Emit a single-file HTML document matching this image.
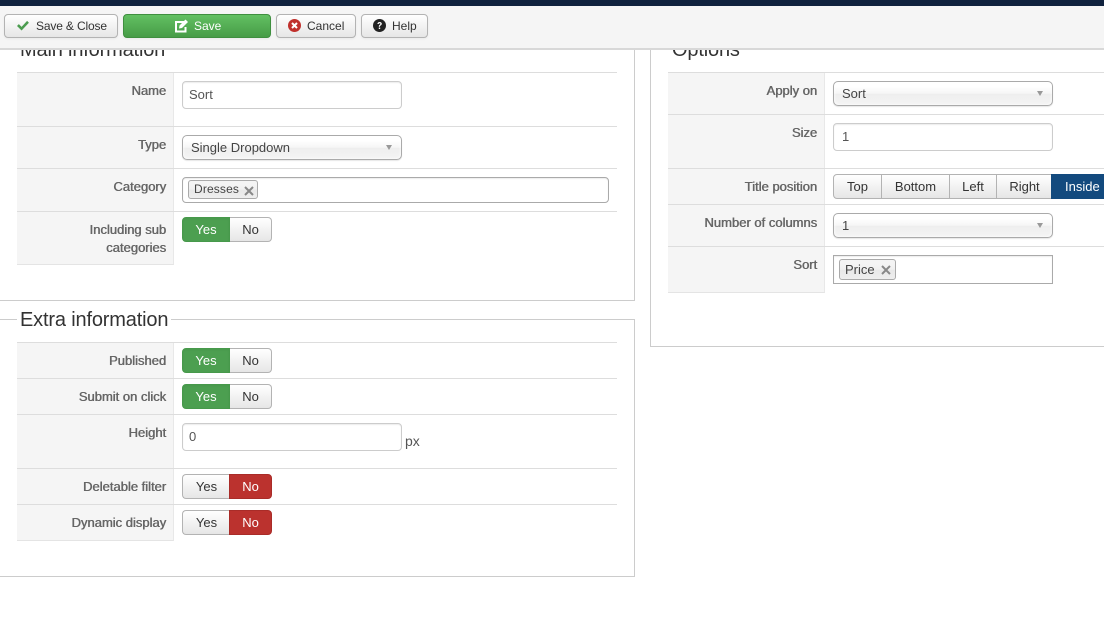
<!DOCTYPE html>
<html><head><meta charset="utf-8"><style>
html,body{margin:0;padding:0;background:#fff;width:1104px;height:619px;overflow:hidden}
body{position:relative;font:13px/18px "Liberation Sans",Arial,sans-serif;color:#333}
div,span,svg{position:absolute;box-sizing:border-box}
.nav{left:0;top:0;width:1104px;height:6px;background:#10223e}
.tb{left:0;top:6px;width:1104px;height:44px;background:#f5f5f5;border-bottom:2px solid #d8d8d8;z-index:5}
.b{top:14px;height:24px;border:1px solid #b3b3b3;border-radius:4px;background:linear-gradient(#fff,#e6e6e6);font-size:12px;line-height:22px;color:#333;z-index:6;box-shadow:0 1px 2px rgba(0,0,0,.05);white-space:nowrap}
.b span{top:0}
.fs{border:1px solid #ccc;background:#fff}
.lg{background:#fff;font-size:20px;line-height:24px;color:#333;padding:0 3px;height:24px;white-space:nowrap;letter-spacing:-.17px}
.th{background:#f5f5f5;border-right:1px solid #e8e8e8;border-bottom:1px solid #e4e4e4}
.ln{height:1px;background:#ddd}
.l{text-align:right;color:#666;text-shadow:.5px 0 0 #666;white-space:nowrap}
.i{border:1px solid #ccc;border-radius:4px;background:#fff;color:#555;padding:4px 6px;line-height:18px;box-shadow:inset 0 1px 1px rgba(0,0,0,.075)}
.s{border:1px solid #aaa;border-radius:5px;height:25px;background:linear-gradient(#fff 20%,#f6f6f6 50%,#eee 52%,#f4f4f4 100%);box-shadow:inset 0 0 3px #fff,0 1px 1px rgba(0,0,0,.1);color:#444;line-height:24px;padding-left:8px}
.s:after{content:"";position:absolute;right:9px;top:9px;border-left:3.500px solid transparent;border-right:3.500px solid transparent;border-top:5px solid #999}
.sw{height:25px;width:90px}
.o{top:0;height:25px;text-align:center;line-height:24px;background:linear-gradient(#fff,#e6e6e6);border:1px solid #b3b3b3;color:#333}
.g{background:#4c9f50;border:1px solid #47994b;color:#fff;box-shadow:inset 0 1px 2px rgba(0,0,0,.05)}
.r{background:#bb322e;border:1px solid #a92c28;color:#fff}
.t{border:1px solid #aaa;border-radius:3px;background:linear-gradient(#f4f4f4 20%,#f0f0f0 50%,#e8e8e8 52%,#eee 100%);color:#444}
</style></head><body>
<div class="nav"></div>
<div class="tb"></div>
<div class="b" style="left:4px;width:114px"><svg style="left:11px;top:5px" width="13" height="11" viewBox="0 0 14 12"><path d="M1 6.500l2-2 3 3 6-6.500 2 2-8 8.500z" fill="#4b9c4f"/></svg><span style="left:31px;letter-spacing:-.15px">Save &amp; Close</span></div>
<div class="b" style="left:123px;width:148px;background:linear-gradient(#62c062,#479c47);border-color:#3f8f3f;color:#fff"><svg style="left:50px;top:4px" width="15" height="14" viewBox="0 0 15 14"><path d="M1 2h9v2H3v7.500h7.500V8h2v5.500H1z" fill="#fff"/><path d="M5.500 6.500l6-6 2.500 2.500-6 6-3 .5z" fill="#fff"/></svg><span style="left:70px">Save</span></div>
<div class="b" style="left:276px;width:80px"><svg style="left:11px;top:4px" width="13" height="13" viewBox="0 0 13 13"><circle cx="6.500" cy="6.500" r="6.500" fill="#c0302c"/><path d="M4 4l5 5M9 4l-5 5" stroke="#fff" stroke-width="2"/></svg><span style="left:30px">Cancel</span></div>
<div class="b" style="left:361px;width:67px"><svg style="left:11px;top:4px" width="13" height="13" viewBox="0 0 13 13"><circle cx="6.500" cy="6.500" r="6.500" fill="#222"/><path d="M4.400 5c.1-1.300 1-2 2.200-2 1.300 0 2.200.8 2.200 1.800 0 1.500-1.800 1.500-1.800 2.900H5.800c0-2 1.600-2 1.600-2.800 0-.4-.3-.7-.8-.7s-.8.300-.9.800z" fill="#fff"/><rect x="5.800" y="8.500" width="1.400" height="1.500" fill="#fff"/></svg><span style="left:30px">Help</span></div>

<!-- Main -->
<div class="fs" style="left:-20px;top:40px;width:655px;height:261px"></div>
<div class="lg" style="left:17px;top:38px">Main information</div>
<div class="th" style="left:17px;top:73px;width:157px;height:192px"></div>
<div class="ln" style="left:17px;top:72px;width:600px"></div>
<div class="ln" style="left:17px;top:126px;width:600px"></div>
<div class="ln" style="left:17px;top:168px;width:600px"></div>
<div class="ln" style="left:17px;top:211px;width:600px"></div>
<div class="l" style="left:17px;width:149px;top:82px">Name</div>
<div class="l" style="left:17px;width:149px;top:136px">Type</div>
<div class="l" style="left:17px;width:149px;top:178px">Category</div>
<div class="l" style="left:17px;width:149px;top:221px">Including sub</div>
<div class="l" style="left:17px;width:149px;top:239px">categories</div>
<div class="i" style="left:182px;top:81px;width:220px;height:28px">Sort</div>
<div class="s" style="left:182px;top:135px;width:220px">Single Dropdown</div>
<div class="i" style="left:182px;top:177px;width:427px;height:26px;border-color:#aaa"></div>
<div class="t" style="left:188px;top:180px;width:70px;height:19px"><span style="left:5px;top:0;font-size:12px;letter-spacing:.15px;line-height:17px">Dresses</span><svg style="left:55px;top:5px" width="10" height="10" viewBox="0 0 10 10"><path d="M1 1l8 8M9 1l-8 8" stroke="#888" stroke-width="2"/></svg></div>
<div class="sw" style="left:182px;top:217px"><div class="o g" style="left:0;width:48px;border-radius:4px 0 0 4px">Yes</div><div class="o" style="left:48px;width:42px;border-left:0;border-radius:0 4px 4px 0">No</div></div>

<!-- Extra -->
<div class="fs" style="left:-20px;top:319px;width:655px;height:258px"></div>
<div class="lg" style="left:17px;top:308px">Extra information</div>
<div class="th" style="left:17px;top:343px;width:157px;height:198px"></div>
<div class="ln" style="left:17px;top:342px;width:600px"></div>
<div class="ln" style="left:17px;top:378px;width:600px"></div>
<div class="ln" style="left:17px;top:414px;width:600px"></div>
<div class="ln" style="left:17px;top:468px;width:600px"></div>
<div class="ln" style="left:17px;top:504px;width:600px"></div>
<div class="l" style="left:17px;width:149px;top:352px">Published</div>
<div class="l" style="left:17px;width:149px;top:388px">Submit on click</div>
<div class="l" style="left:17px;width:149px;top:424px">Height</div>
<div class="l" style="left:17px;width:149px;top:478px">Deletable filter</div>
<div class="l" style="left:17px;width:149px;top:514px">Dynamic display</div>
<div class="sw" style="left:182px;top:348px"><div class="o g" style="left:0;width:48px;border-radius:4px 0 0 4px">Yes</div><div class="o" style="left:48px;width:42px;border-left:0;border-radius:0 4px 4px 0">No</div></div>
<div class="sw" style="left:182px;top:384px"><div class="o g" style="left:0;width:48px;border-radius:4px 0 0 4px">Yes</div><div class="o" style="left:48px;width:42px;border-left:0;border-radius:0 4px 4px 0">No</div></div>
<div class="i" style="left:182px;top:423px;width:220px;height:28px">0</div>
<div style="left:405px;top:432px;color:#555;font-size:14px">px</div>
<div class="sw" style="left:182px;top:474px"><div class="o" style="left:0;width:48px;border-right:0;border-radius:4px 0 0 4px">Yes</div><div class="o r" style="left:47px;width:43px;border-radius:0 4px 4px 0">No</div></div>
<div class="sw" style="left:182px;top:510px"><div class="o" style="left:0;width:48px;border-right:0;border-radius:4px 0 0 4px">Yes</div><div class="o r" style="left:47px;width:43px;border-radius:0 4px 4px 0">No</div></div>

<!-- Options -->
<div class="fs" style="left:650px;top:40px;width:480px;height:307px"></div>
<div class="lg" style="left:669px;top:38px">Options</div>
<div class="th" style="left:668px;top:73px;width:157px;height:220px"></div>
<div class="ln" style="left:668px;top:72px;width:436px"></div>
<div class="ln" style="left:668px;top:114px;width:436px"></div>
<div class="ln" style="left:668px;top:168px;width:436px"></div>
<div class="ln" style="left:668px;top:204px;width:436px"></div>
<div class="ln" style="left:668px;top:246px;width:436px"></div>
<div class="l" style="left:668px;width:149px;top:82px">Apply on</div>
<div class="l" style="left:668px;width:149px;top:124px">Size</div>
<div class="l" style="left:668px;width:149px;top:178px">Title position</div>
<div class="l" style="left:668px;width:149px;top:214px">Number of columns</div>
<div class="l" style="left:668px;width:149px;top:256px">Sort</div>
<div class="s" style="left:833px;top:81px;width:220px">Sort</div>
<div class="i" style="left:833px;top:123px;width:220px;height:28px;padding-left:8px">1</div>
<div class="o" style="left:833px;top:174px;width:49px;border-radius:4px 0 0 4px">Top</div>
<div class="o" style="left:881px;top:174px;width:69px">Bottom</div>
<div class="o" style="left:949px;top:174px;width:48px">Left</div>
<div class="o" style="left:996px;top:174px;width:56px;border-right:0">Right</div>
<div class="o" style="left:1051px;top:174px;width:60px;background:#134a7e;border-color:#134a7e;color:#fff;text-align:left;padding-left:13px">Inside</div>
<div class="s" style="left:833px;top:213px;width:220px">1</div>
<div class="i" style="left:833px;top:255px;width:220px;height:29px;border-color:#aaa;border-radius:0"></div>
<div class="t" style="left:839px;top:259px;width:57px;height:21px"><span style="left:5px;top:1px">Price</span><svg style="left:41px;top:5px" width="10" height="10" viewBox="0 0 10 10"><path d="M1 1l8 8M9 1l-8 8" stroke="#888" stroke-width="2"/></svg></div>
</body></html>
